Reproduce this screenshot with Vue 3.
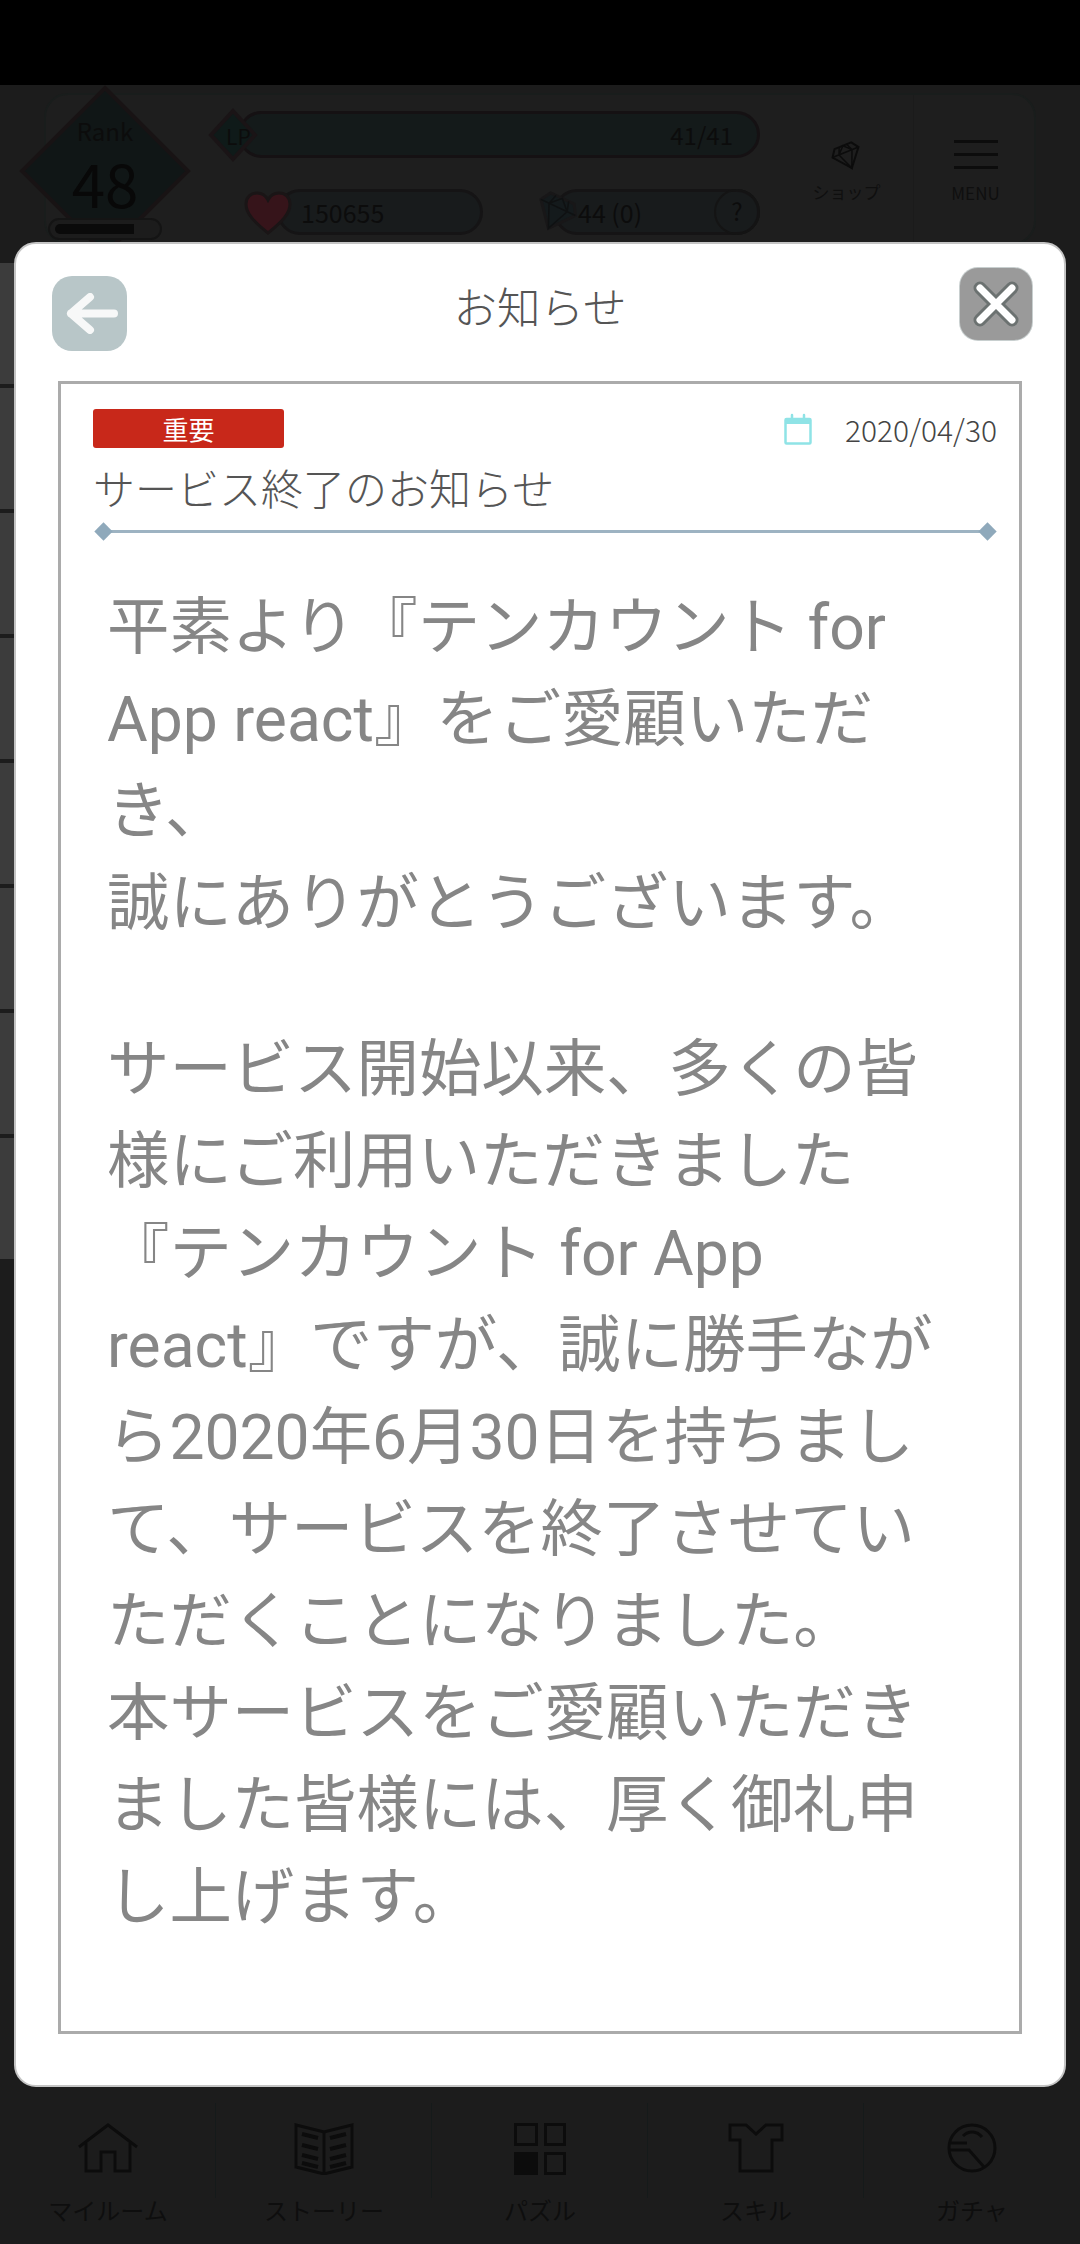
<script setup>
const rows = 8;

const navItems = [
  { label: 'マイルーム', icon: 'home' },
  { label: 'ストーリー', icon: 'book' },
  { label: 'パズル', icon: 'puzzle' },
  { label: 'スキル', icon: 'skill' },
  { label: 'ガチャ', icon: 'gacha' }
];

// 本文は元画像と同じ位置で改行する
const firstParagraph = [
  '平素より『テンカウント for',
  'App react』をご愛顧いただ',
  'き、',
  '誠にありがとうございます。'
];
const secondParagraph = [
  'サービス開始以来、多くの皆',
  '様にご利用いただきました',
  '『テンカウント for App',
  'react』ですが、誠に勝手なが',
  'ら2020年6月30日を持ちまし',
  'て、サービスを終了させてい',
  'ただくことになりました。',
  '本サービスをご愛顧いただき',
  'ました皆様には、厚く御礼申',
  'し上げます。'
];
</script>

<template>
  <div class="screen">
    <div class="status-bar"></div>

    <!-- 上部ステータス -->
    <div class="top-area">
      <div class="panel">
        <div class="rank">
          <svg class="rank-shape" viewBox="0 0 172 172">
            <path d="M86 3 169 86 86 169 3 86Z" fill="#101616" stroke="#181314" stroke-width="4" />
          </svg>
          <span class="rank-label">Rank</span>
          <span class="rank-value">48</span>
          <div class="rank-bar"><div class="rank-fill"></div></div>
        </div>

        <div class="stats">
          <div class="lp-row">
            <svg class="lp-mark" viewBox="0 0 50 54">
              <path d="M25 3 47 27 25 51 3 27Z" fill="#0f1a19" stroke="#1a1416" stroke-width="4" />
            </svg>
            <span class="lp-name">LP</span>
            <div class="lp-bar">41/41</div>
          </div>
          <div class="pill-row">
            <div class="pill-wrap heart-wrap">
              <svg class="heart" viewBox="0 0 50 46">
                <path d="M25 43C10 31 3 23 3 14 3 7 8 3 14 3c5 0 9 3 11 7 2-4 6-7 11-7 6 0 11 4 11 11 0 9-7 17-22 29Z" fill="#36141a" stroke="#1a1516" stroke-width="3" />
              </svg>
              <div class="pill">150655</div>
            </div>
            <div class="pill-wrap gem-wrap">
              <svg class="gem" viewBox="0 0 46 48">
                <g transform="rotate(25 23 24)">
                  <path d="M10 9H36L42 19 23 42 4 19Z" fill="#141a1c" stroke="#181718" stroke-width="3" />
                  <path d="M4 19H42M16 9 13 19 23 42 33 19 30 9M13 19 23 9 33 19" fill="none" stroke="#0f1112" stroke-width="1.5" />
                </g>
              </svg>
              <div class="pill">
                <span>44 (0)</span>
                <span class="help">?</span>
              </div>
            </div>
          </div>
        </div>

        <div class="tool shop">
          <svg class="shop-icon" viewBox="0 0 32 34">
            <g transform="rotate(-22 16 17)" fill="none" stroke="#0c0c0c" stroke-width="2">
              <path d="M7 6H25L30 13 16 30 2 13Z" />
              <path d="M2 13H30M12 6 9 13 16 30 23 13 20 6M9 13 16 6 23 13" stroke-width="1.5" />
            </g>
          </svg>
          <span class="tool-label">ショップ</span>
        </div>
        <div class="tool menu">
          <div class="burger"><i></i><i></i><i></i></div>
          <span class="tool-label">MENU</span>
        </div>
      </div>
    </div>

    <!-- 背面のリスト -->
    <div class="list">
      <div v-for="n in rows" :key="n" class="list-row"></div>
    </div>

    <!-- 下部ナビ -->
    <div class="nav">
      <div v-for="item in navItems" :key="item.label" class="nav-item">
        <div class="nav-icon">
          <svg v-if="item.icon === 'home'" width="60" height="50" viewBox="0 0 60 50" fill="none" stroke="#0c0c0c" stroke-width="3">
            <path d="M1 24 30 2 59 24" />
            <path d="M8 20V48H23V29H37V48H52V20" />
          </svg>
          <svg v-else-if="item.icon === 'book'" width="60" height="52" viewBox="0 0 60 52" fill="none" stroke="#0c0c0c" stroke-width="3">
            <path d="M2 2 30 9 58 2V44L30 51 2 44Z" />
            <path d="M30 9V51" />
            <path d="M8 11 24 15M8 22 24 26M8 32 24 36M8 40 24 44M52 11 36 15M52 22 36 26M52 32 36 36M52 40 36 44" stroke-width="4" />
          </svg>
          <svg v-else-if="item.icon === 'puzzle'" width="52" height="52" viewBox="0 0 52 52" fill="none" stroke="#0c0c0c" stroke-width="3">
            <rect x="1.5" y="1.5" width="21" height="20" />
            <rect x="31.5" y="1.5" width="19" height="20" />
            <rect x="1.5" y="30.5" width="21" height="20" fill="#0c0c0c" />
            <rect x="31.5" y="30.5" width="19" height="20" />
          </svg>
          <svg v-else-if="item.icon === 'skill'" width="56" height="50" viewBox="0 0 56 50" fill="none" stroke="#0c0c0c" stroke-width="3">
            <path d="M2 2H18L28 11 38 2H54V17H44V48H12V17H2Z" />
          </svg>
          <svg v-else width="50" height="50" viewBox="0 0 50 50" fill="none" stroke="#0c0c0c" stroke-width="3">
            <circle cx="25" cy="25" r="23" />
            <path d="M16 13C22 7 30 8 35 14" />
            <path d="M3 20H20M2 27H22L37 44" />
          </svg>
        </div>
        <span class="nav-label">{{ item.label }}</span>
      </div>
    </div>

    <!-- お知らせモーダル -->
    <div class="modal">
      <div class="modal-head">
        <button class="back-btn" type="button">
          <svg width="52" height="41" viewBox="0 0 52 41" fill="none" stroke="#f7f8f8" stroke-width="8" stroke-linecap="round" stroke-linejoin="round">
            <path d="M24 4 5 20.5 24 37M5 20.5H48" />
          </svg>
        </button>
        <h2 class="modal-title">お知らせ</h2>
        <button class="close-btn" type="button">
          <svg width="46" height="46" viewBox="0 0 46 46" stroke-linecap="round">
            <path d="M7 7 39 39M39 7 7 39" stroke="#6c7271" stroke-width="13" />
            <path d="M7 7 39 39M39 7 7 39" stroke="#fff" stroke-width="7" />
          </svg>
        </button>
      </div>

      <div class="notice">
        <div class="notice-meta">
          <span class="badge">重要</span>
          <div class="date">
            <svg class="calendar" width="28" height="32" viewBox="0 0 28 32" fill="none" stroke="#8fe3e6" stroke-width="2.5">
              <rect x="1.5" y="6" width="25" height="24.5" rx="1" />
              <path d="M1.5 7.5H26.5V10.5H1.5Z" fill="#8fe3e6" stroke-width="1" />
              <path d="M8 2V7M20 2V7" stroke-width="2.5" stroke-linecap="round" />
            </svg>
            <span>2020/04/30</span>
          </div>
        </div>
        <h3 class="notice-title">サービス終了のお知らせ</h3>
        <div class="divider"></div>
        <div class="notice-body">
          <p>
            <span v-for="line in firstParagraph" :key="line" class="line">{{ line }}</span>
          </p>
          <p>
            <span v-for="line in secondParagraph" :key="line" class="line">{{ line }}</span>
          </p>
        </div>
      </div>
    </div>
  </div>
</template>

<style>
html,
body {
  margin: 0;
  background: #1c1c1c;
}
</style>

<style scoped>
.screen {
  position: relative;
  width: 1080px;
  height: 2244px;
  display: flex;
  flex-direction: column;
  overflow: hidden;
  background: #1c1c1c;
  font-family: Roboto, "Noto Sans CJK JP", sans-serif;
}

.status-bar {
  height: 85px;
  background: #000;
}

.top-area {
  height: 178px;
  padding: 8px 44px 0;
  box-sizing: border-box;
}

.panel {
  position: relative;
  display: flex;
  height: 152px;
  box-sizing: border-box;
  border: 2px solid #191d1c;
  border-radius: 24px;
  background: #1e1e1e;
  color: #0c0c0c;
  font-family: "Noto Sans CJK JP", sans-serif;
}

.rank {
  position: absolute;
  left: -27px;
  top: -10px;
  width: 172px;
  height: 172px;
  display: flex;
  flex-direction: column;
  align-items: center;
}

.rank-shape {
  position: absolute;
  inset: 0;
}

.rank-label {
  position: relative;
  margin-top: 29px;
  font-size: 24px;
  line-height: 34px;
}

.rank-value {
  position: relative;
  margin-top: 1px;
  font-size: 60px;
  font-weight: 400;
  line-height: 66px;
  color: #080808;
}

.rank-bar {
  position: absolute;
  left: 29px;
  top: 133px;
  width: 114px;
  height: 22px;
  box-sizing: border-box;
  padding: 4px 5px;
  border: 2px solid #141414;
  border-radius: 11px;
  background: #1c1c1c;
}

.rank-fill {
  width: 79px;
  height: 10px;
  border-radius: 5px 0 0 5px;
  background: #0a0a0a;
}

.stats {
  flex: none;
  width: 552px;
  margin-left: 162px;
  padding-top: 13px;
  display: flex;
  flex-direction: column;
  gap: 28px;
}

.lp-row {
  position: relative;
  height: 53px;
  display: flex;
  align-items: center;
  padding-left: 30px;
}

.lp-mark {
  position: absolute;
  left: 0;
  top: 0;
  width: 50px;
  height: 54px;
  z-index: 1;
}

.lp-name {
  position: absolute;
  left: 18px;
  top: 13px;
  z-index: 2;
  font-size: 21px;
  line-height: 30px;
}

.lp-bar {
  flex: 1;
  height: 47px;
  box-sizing: border-box;
  border: 3px solid #151113;
  border-radius: 24px;
  background: #141a1a;
  text-align: right;
  padding-right: 24px;
  font-size: 24px;
  line-height: 41px;
}

.pill-row {
  display: flex;
  justify-content: space-between;
  padding-left: 35px;
}

.pill-wrap {
  position: relative;
  width: 240px;
  height: 46px;
  display: flex;
  justify-content: flex-end;
}

.gem-wrap {
  width: 227px;
}

.heart {
  position: absolute;
  left: 0;
  top: 1px;
  width: 50px;
  height: 46px;
  z-index: 1;
}

.gem {
  position: absolute;
  left: 0;
  top: -1px;
  width: 46px;
  height: 48px;
  z-index: 1;
}

.pill {
  width: 206px;
  height: 46px;
  box-sizing: border-box;
  border: 3px solid #151415;
  border-radius: 23px;
  background: #181b1c;
  display: flex;
  align-items: center;
  justify-content: space-between;
  padding-left: 21px;
  font-size: 25px;
}

.help {
  width: 46px;
  height: 46px;
  margin-right: -3px;
  box-sizing: border-box;
  border: 2px solid #141414;
  border-radius: 50%;
  text-align: center;
  line-height: 40px;
  font-size: 24px;
}

.tool {
  flex: none;
  display: flex;
  flex-direction: column;
  align-items: center;
}

.shop {
  width: 133px;
  margin-left: 20px;
}

.menu {
  width: 121px;
  padding-left: 3px;
  box-sizing: border-box;
  border-left: 1px solid #1b1b1b;
}

.shop-icon {
  width: 32px;
  height: 34px;
  margin-top: 44px;
}

.burger {
  width: 44px;
  margin-top: 45px;
  height: 29px;
  display: flex;
  flex-direction: column;
  justify-content: space-between;
}

.burger i {
  display: block;
  height: 3px;
  background: #0c0c0c;
}

.tool-label {
  margin-top: 6px;
  font-size: 17px;
  line-height: 26px;
  color: #0f0f0f;
}

.menu .tool-label {
  margin-top: 11px;
}

.list {
  flex: 1;
  width: 40px;
}

.list-row {
  height: 121px;
  margin-bottom: 4px;
  background: #3c3c3c;
}

.nav {
  height: 149px;
  padding-top: 8px;
  box-sizing: border-box;
  display: grid;
  grid-template-columns: repeat(5, 216px);
}

.nav-item {
  display: flex;
  flex-direction: column;
  align-items: center;
}

.nav-icon {
  width: 100%;
  height: 95px;
  box-sizing: border-box;
  padding-top: 20px;
  display: flex;
  justify-content: center;
  align-items: flex-start;
  border-right: 1px solid #151a1a;
}

.nav-item:last-child .nav-icon {
  border-right: none;
}

.nav-label {
  font-family: "Noto Sans CJK JP", sans-serif;
  font-size: 24px;
  line-height: 24px;
  color: #0e0e0e;
}

.modal {
  position: absolute;
  left: 14px;
  top: 242px;
  width: 1052px;
  height: 1845px;
  box-sizing: border-box;
  border: 2px solid #c4c4c4;
  border-radius: 22px;
  background: #fff;
  display: flex;
  flex-direction: column;
}

.modal-head {
  height: 137px;
  flex: none;
  display: grid;
  grid-template-columns: 1fr auto 1fr;
  align-items: start;
}

.back-btn,
.close-btn {
  border: none;
  padding: 0;
  display: flex;
  align-items: center;
  justify-content: center;
}

.back-btn {
  width: 75px;
  height: 75px;
  margin: 32px 0 0 36px;
  padding-left: 4px;
  border-radius: 20px;
  background: #b8c6c8;
}

.close-btn {
  width: 72px;
  height: 72px;
  margin: 24px 32px 0 0;
  justify-self: end;
  border-radius: 18px;
  background: #9a9a9a;
  box-shadow: 0 0 0 1px #c8cfcf;
}

.modal-title {
  margin: 32px 0 0;
  font-family: "Noto Sans CJK JP", sans-serif;
  font-size: 43.5px;
  font-weight: 300;
  line-height: 60px;
  color: #555;
}

.notice {
  flex: 1;
  margin: 0 42px 51px 42px;
  box-sizing: border-box;
  border: 3px solid #ababab;
  padding: 25px 22px 0 32px;
  font-family: "Noto Sans CJK JP", sans-serif;
}

.notice-meta {
  height: 39px;
  display: flex;
  justify-content: space-between;
  align-items: flex-start;
}

.badge {
  width: 191px;
  height: 39px;
  border-radius: 3px;
  background: #c8281a;
  color: #fff;
  text-align: center;
  font-size: 26px;
  line-height: 39px;
}

.date {
  display: flex;
  align-items: center;
  gap: 33px;
  height: 40px;
  font-size: 30px;
  font-weight: 300;
  color: #444;
}

.notice-title {
  margin: 9px 0 0;
  font-size: 42px;
  font-weight: 300;
  line-height: 60px;
  color: #555;
}

.divider {
  position: relative;
  height: 3px;
  margin: 13px 9px 0 10px;
  background: #9db3c2;
}

.divider::before,
.divider::after {
  content: "";
  position: absolute;
  top: -5px;
  width: 13px;
  height: 13px;
  background: #8fa9bb;
  transform: rotate(45deg);
}

.divider::before {
  left: -6px;
}

.divider::after {
  right: -6px;
}

.notice-body {
  margin-top: 49px;
  padding-left: 14px;
  font-family: Roboto, "Noto Sans CJK JP", sans-serif;
  font-size: 62.4px;
  line-height: 92px;
  color: #868686;
}

.notice-body p {
  margin: 0 0 74px;
}

.line {
  display: block;
  white-space: nowrap;
}
</style>
